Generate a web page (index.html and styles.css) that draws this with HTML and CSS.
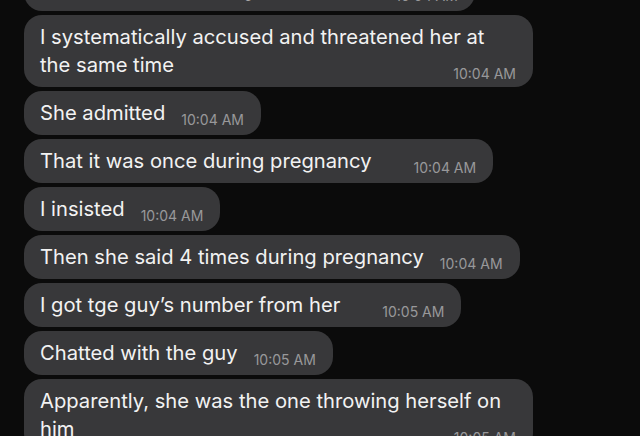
FILE: index.html
```html
<!DOCTYPE html>
<html lang="en">
<head>
    <meta charset="UTF-8">
    <meta name="viewport" content="width=device-width, initial-scale=1.0">
    <title>Chat</title>
    <link rel="stylesheet" href="styles.css">
</head>
<body>
    <div class="chat">
        <!-- previous message, scrolled off the top -->
        <div class="msg">
            <span class="text">She denied everything at the outset</span>
            <span class="time">10:04 AM</span>
        </div>
        <div class="msg multi">
            <span class="text">I systematically accused and threatened her at the same time</span>
            <span class="time">10:04 AM</span>
        </div>
        <div class="msg">
            <span class="text">She admitted</span>
            <span class="time">10:04 AM</span>
        </div>
        <div class="msg wide">
            <span class="text">That it was once during pregnancy</span>
            <span class="time">10:04 AM</span>
        </div>
        <div class="msg">
            <span class="text">I insisted</span>
            <span class="time">10:04 AM</span>
        </div>
        <div class="msg">
            <span class="text">Then she said 4 times during pregnancy</span>
            <span class="time">10:04 AM</span>
        </div>
        <div class="msg wide">
            <span class="text">I got tge guy’s number from her</span>
            <span class="time">10:05 AM</span>
        </div>
        <div class="msg">
            <span class="text">Chatted with the guy</span>
            <span class="time">10:05 AM</span>
        </div>
        <div class="msg multi">
            <span class="text">Apparently, she was the one throwing herself on him</span>
            <span class="time">10:05 AM</span>
        </div>
    </div>
</body>
</html>
```
FILE: styles.css
```css
*{
    padding: 0;
    margin: 0;
    box-sizing: border-box;
}
html, body{
    width: 100%;
    height: 100%;
}
body{
    background: #0b0b0b;
    font-family: Inter, "Liberation Sans", sans-serif;
    overflow: hidden;
}

.chat{
    display: flex;
    flex-direction: column;
    align-items: flex-start;
    gap: 4px;
    padding: 0 24px;
    margin-top: -33px;
}
.msg{
    display: flex;
    align-items: flex-end;
    max-width: 509px;
    padding: 8px 17px 8px 16px;
    background: #38383a;
    border-radius: 18px;
}
.msg .text{
    color: #f2f2f2;
    font-size: 20.2px;
    line-height: 28px;
}
.msg .time{
    margin-left: 16px;
    color: #98989a;
    font-size: 14px;
    line-height: 14px;
    white-space: nowrap;
}
/* these two have a wider gap before the time */
.msg.wide .time{
    margin-left: 42px;
}
.msg.multi{
    flex-direction: column;
    align-items: stretch;
    padding-bottom: 6px;
}
.msg.multi .time{
    align-self: flex-end;
    margin-top: -12px;
}
```
